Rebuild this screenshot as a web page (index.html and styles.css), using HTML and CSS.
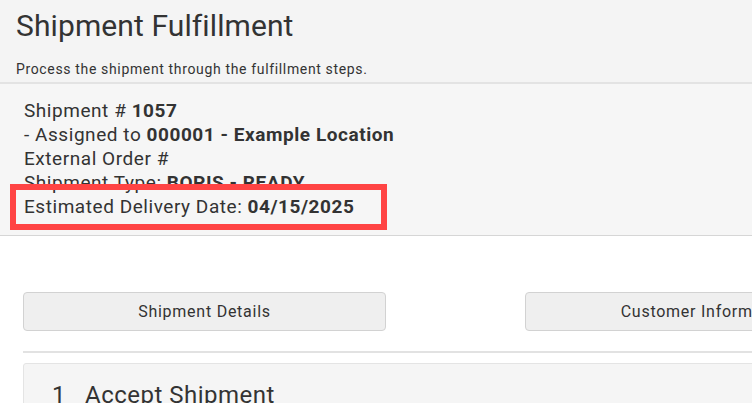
FILE: index.html
```html
<!DOCTYPE html>
<html lang="en">
<head>
<meta charset="utf-8">
<title>Shipment Fulfillment</title>
<link rel="stylesheet" href="styles.css">
</head>
<body>
<header class="page-header">
  <h1 class="title">Shipment Fulfillment</h1>
  <p class="subtitle">Process the shipment through the fulfillment steps.</p>
</header>
<section class="info">
  <div class="line">Shipment # <b>1057</b></div>
  <div class="line">- Assigned to <b>000001 - Example Location</b></div>
  <div class="line">External Order #</div>
  <div class="line">Shipment Type: <b>BOPIS - READY</b></div>
  <div class="line">Estimated Delivery Date: <b>04/15/2025</b></div>
  <div class="highlight"></div>
</section>
<main class="main">
  <div class="buttons">
    <button class="btn">Shipment Details</button>
    <button class="btn">Customer Information</button>
  </div>
  <hr class="rule">
  <div class="step">
    <span class="step-num">1</span><span class="step-title">Accept Shipment</span>
  </div>
</main>
</body>
</html>
```
FILE: styles.css
```css
html, body {
  margin: 0;
  padding: 0;
  overflow: hidden;
  background: #ffffff;
}
body {
  font-family: Roboto, "Liberation Sans", sans-serif;
  color: #333333;
  width: 752px;
  height: 403px;
}
.page-header {
  background: #f4f4f4;
  padding: 8px 16px 3px;
  border-bottom: 2px solid #e3e3e3;
}
.title {
  margin: 0;
  font-size: 30px;
  font-weight: 400;
  line-height: 35px;
  letter-spacing: 0.1px;
  color: #333333;
}
.subtitle {
  margin: 16px 0 0;
  font-size: 14px;
  line-height: 20px;
  letter-spacing: 0.65px;
}
.info {
  position: relative;
  background: #f6f6f6;
  padding: 15px 24px 16px;
  border-bottom: 1px solid #d6d6d6;
  font-size: 19px;
  line-height: 24px;
  letter-spacing: 0.55px;
}
.info b {
  font-weight: 700;
}
.highlight {
  position: absolute;
  left: 10px;
  top: 100px;
  width: 365px;
  height: 34px;
  border: 6px solid #ff4444;
}
.main {
  width: 1100px;
  padding: 56px 0 0 23px;
}
.buttons {
  display: grid;
  grid-template-columns: 363px 363px;
  column-gap: 139px;
}
.btn {
  height: 39px;
  background: #efefef;
  border: 1px solid #d2d2d2;
  border-radius: 4px;
  font-family: Roboto, "Liberation Sans", sans-serif;
  font-size: 16px;
  letter-spacing: 0.75px;
  color: #333333;
  padding: 0;
}
.rule {
  margin: 20px 0 0;
  border: 0;
  height: 2px;
  background: #e2e2e2;
}
.step {
  margin-top: 10px;
  background: #f5f5f5;
  border: 1px solid #e4e4e4;
  border-radius: 3px;
  padding: 16px 28px;
  font-size: 24px;
  line-height: 30px;
  letter-spacing: 0.5px;
  height: 80px;
}
.step-num {
  display: inline-block;
  width: 33px;
}
```
